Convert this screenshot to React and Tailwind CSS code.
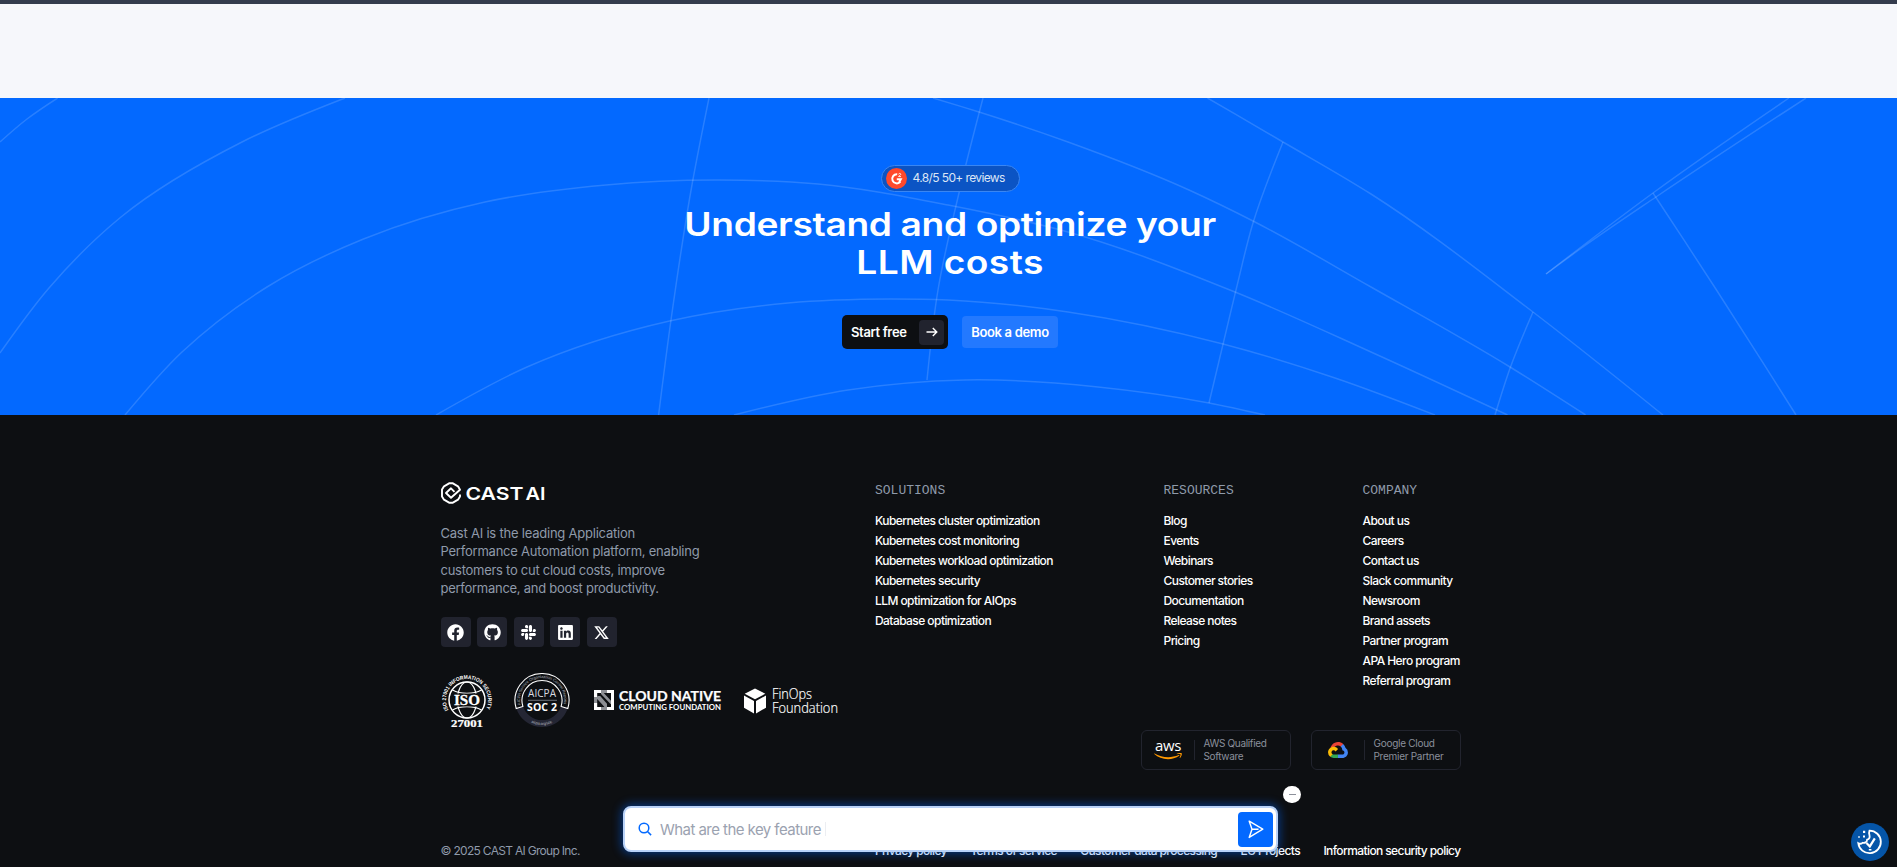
import { FaFacebook, FaGithub, FaSlack, FaLinkedin } from "react-icons/fa";
import { RiTwitterXLine } from "react-icons/ri";

const curves = [
  [[57.6, 0], [27, 21], [0, 44]],
  [[345, 0], [242, 44], [121, 119], [49, 190], [0, 255]],
  [[125, 317], [182, 254], [267, 189], [363.5, 141], [485, 104], [606, 87], [715, 82], [818, 86], [948, 107], [1068, 134], [1235, 194], [1371, 254], [1507.5, 317]],
  [[436, 317], [527, 269], [669.5, 223], [788, 205], [891, 201], [948, 202], [1068, 214], [1223, 246], [1335, 280], [1435, 317]],
  [[734, 317], [848, 292], [965, 282], [1098, 289], [1209, 305], [1265, 317]],
  [[933, 0], [979, 14], [1068, 44], [1189, 92], [1253, 123], [1371, 189], [1510, 269], [1585.6, 317]],
  [[1207.5, 0], [1283, 44], [1371, 96], [1533, 214], [1663, 317]],
  [[1789, 0], [1653, 95], [1546, 176]],
  [[1806, 0], [1656, 99], [1583, 149], [1546, 176]],
  [[1653, 95], [1716.5, 192], [1796, 317]],
  [[709, 0], [692.5, 84], [671, 222], [658.6, 317]],
  [[983, 0], [959, 95], [938, 192], [927, 282]],
  [[1283, 44], [1253, 125], [1236, 192], [1209, 305]],
  [[1533, 214], [1510.5, 269], [1495, 317]],
];

// Chord-length weighted spline through the given points.
function smooth(p) {
  const n = p.length - 1;
  const len = [];
  const dir = [];
  for (let i = 0; i < n; i++) {
    const dx = p[i + 1][0] - p[i][0];
    const dy = p[i + 1][1] - p[i][1];
    len[i] = Math.hypot(dx, dy);
    dir[i] = [dx / len[i], dy / len[i]];
  }
  const m = [];
  for (let i = 1; i < n; i++) {
    m[i] = [0, 1].map((k) => (dir[i - 1][k] * len[i] + dir[i][k] * len[i - 1]) / (len[i] + len[i - 1]));
  }
  m[0] = [0, 1].map((k) => 1.5 * dir[0][k] - 0.5 * m[1][k]);
  m[n] = [0, 1].map((k) => 1.5 * dir[n - 1][k] - 0.5 * m[n - 1][k]);
  let d = `M${p[0][0]} ${p[0][1]}`;
  for (let i = 0; i < n; i++) {
    const h = len[i] / 3;
    const a = [p[i][0] + m[i][0] * h, p[i][1] + m[i][1] * h];
    const b = [p[i + 1][0] - m[i + 1][0] * h, p[i + 1][1] - m[i + 1][1] * h];
    d += `C${a[0].toFixed(1)} ${a[1].toFixed(1)} ${b[0].toFixed(1)} ${b[1].toFixed(1)} ${p[i + 1][0]} ${p[i + 1][1]}`;
  }
  return d;
}

const columns = [
  { title: "SOLUTIONS", width: "w-[288.5px]", links: ["Kubernetes cluster optimization", "Kubernetes cost monitoring", "Kubernetes workload optimization", "Kubernetes security", "LLM optimization for AIOps", "Database optimization"] },
  { title: "RESOURCES", width: "w-[199px]", links: ["Blog", "Events", "Webinars", "Customer stories", "Documentation", "Release notes", "Pricing"] },
  { title: "COMPANY", width: "w-[98px]", links: ["About us", "Careers", "Contact us", "Slack community", "Newsroom", "Brand assets", "Partner program", "APA Hero program", "Referral program"] },
];

const socials = [FaFacebook, FaGithub, FaSlack, FaLinkedin, RiTwitterXLine];

function Hero() {
  return (
    <section className="relative h-[317px] overflow-hidden bg-[#0369ff]">
      <svg className="absolute inset-0" width="1897" height="317" fill="none" stroke="#fff" strokeOpacity="0.15" strokeWidth="1.5">
        {curves.map((c, i) => <path key={i} d={smooth(c)} />)}
      </svg>
      <div className="relative flex flex-col items-center pl-[3px] pt-[67px]">
        <div className="flex h-[27px] w-[139px] items-center rounded-full border border-[#3a86f2] bg-[#0b54c4] pl-[4px] text-[12px] tracking-[-0.62px] text-[#dce6f6]">
          <svg width="21" height="21" viewBox="0 0 21 21" className="mr-[6px] shrink-0">
            <circle cx="10.5" cy="10.5" r="10.5" fill="#ff492c" />
            <path d="M11.2 6.2a4.6 4.6 0 1 0 3.2 7.5M10.8 11.2h4l-1.6 3" fill="none" stroke="#fff" strokeWidth="2" />
            <path d="M12.6 6.3c.3-1.3 2.4-1.1 2.1.2-.2.9-2 1-2.1 2.1h2.4" fill="none" stroke="#fff" strokeWidth=".9" />
          </svg>
          <span className="relative -top-px whitespace-nowrap">4.8/5 50+ reviews</span>
        </div>
        <h2 className="mt-[14px] flex scale-x-[1.16] flex-col items-center whitespace-nowrap text-[32px] font-semibold leading-[38px] text-white">
          <span className="tracking-[-0.3px]">Understand and optimize your</span>
          <span className="tracking-[0.39px]">LLM costs</span>
        </h2>
        <div className="mt-[33px] flex items-center gap-[14px] text-[13px] font-semibold text-white">
          <div className="flex h-[34px] w-[106px] items-center justify-between rounded-[5px] bg-[#0d0f12] pl-[9px] pr-[4px]">
            <span className="pt-[2px] tracking-[-0.36px]">Start free</span>
            <span className="flex h-[25px] w-[25px] items-center justify-center rounded-[4px] bg-[#21232e]">
              <svg width="12" height="10" viewBox="0 0 12 10" fill="none" stroke="#fff" strokeWidth="1.4"><path d="M.5 5h10.3M6.8 1l4 4-4 4" /></svg>
            </span>
          </div>
          <div className="flex h-8 w-24 items-center justify-center rounded-[4px] bg-[#2379ff] pt-[2px] tracking-[-0.33px]">Book a demo</div>
        </div>
      </div>
    </section>
  );
}

function CastLogo() {
  return (
    <svg width="106" height="22" viewBox="0 0 106 22" fill="none">
      <path d="M13.5 9.8 10 6.3 5 11l5 4.8L19 7.8 17 4.3 11.500 1.200h-3L3 4.300 1 7.500v7L3 17.700l5.500 3.100h3L17 17.700l2-3.200v-2" stroke="#fff" strokeWidth="1.900" strokeLinejoin="round" />
      <text x="24.500" y="17.600" fontFamily="Inter" fontSize="17.800" fontWeight="600" fill="#fff" textLength="58" lengthAdjust="spacingAndGlyphs">CAST</text>
      <text x="84.500" y="17.600" fontFamily="Inter" fontSize="17.800" fontWeight="600" fill="#fff" textLength="20" lengthAdjust="spacingAndGlyphs">AI</text>
    </svg>
  );
}

function IsoBadge() {
  return (
    <svg width="54" height="56" viewBox="0 0 54 56" fill="none">
      <path id="iso-arc" d="M7.5 36.900A21 21 0 1 1 44.500 36.900" />
      <text fontFamily="Liberation Sans" fontWeight="700" fontSize="5.400" fill="#fff"><textPath href="#iso-arc" textLength="85" lengthAdjust="spacingAndGlyphs">ISO 27001 INFORMATION SECURITY</textPath></text>
      <g stroke="#fff" strokeWidth="1.200">
        <circle cx="26" cy="27" r="18" strokeWidth="1.500" />
        <ellipse cx="26" cy="27" rx="9.500" ry="18" />
        <path d="M11.500 17c8 4.500 21 4.500 29 0M11.500 37c8-4.500 21-4.500 29 0" />
      </g>
      <path d="M12 20.500h28v13H12z" fill="#0d0f12" />
      <text x="26" y="31.800" textAnchor="middle" fontFamily="Liberation Serif" fontWeight="700" fontSize="14.500" fill="#fff" stroke="#fff" strokeWidth=".3" textLength="26" lengthAdjust="spacingAndGlyphs">ISO</text>
      <text x="26" y="54" textAnchor="middle" fontFamily="Liberation Serif" fontWeight="700" fontSize="9.500" fill="#fff" stroke="#fff" strokeWidth=".2" textLength="32" lengthAdjust="spacingAndGlyphs">27001</text>
    </svg>
  );
}

function SocBadge() {
  return (
    <svg width="56" height="56" viewBox="0 0 56 56" fill="none">
      <path d="M2.200 35A27 27 0 0 0 53.800 35L47.100 33A20 20 0 0 1 8.900 33Z" fill="#242634" />
      <path d="M2.200 35.500A27 27 0 1 1 53.800 35.500L47.100 33.500A20 20 0 1 0 8.900 33.500Z" stroke="#fff" strokeWidth="1.100" />
      <path id="soc-arc" d="M7.100 33.800A22 22 0 1 1 48.900 33.800" />
      <text fontFamily="Liberation Sans" fontSize="4" fill="#aeb2bb"><textPath href="#soc-arc" startOffset="2" textLength="78">AICPA Service Organization Control Reports</textPath></text>
      <path id="soc-low" d="M12 46.200A25 25 0 0 0 44 46.200" />
      <text fontFamily="Liberation Sans" fontSize="4" fill="#aeb2bb"><textPath href="#soc-low" startOffset="6" textLength="22">aicpa.org/soc</textPath></text>
      <text x="28" y="24" textAnchor="middle" fontFamily="Open Sans" fontSize="10" fill="#d9dbe0" textLength="28">AICPA</text>
      <path d="M14 27.300h29" stroke="#6b6e77" strokeWidth="1" />
      <text x="28" y="37.500" textAnchor="middle" fontFamily="Open Sans" fontWeight="700" fontSize="10.500" fill="#fff" textLength="30">SOC 2</text>
    </svg>
  );
}

function CncfLogo() {
  return (
    <svg width="129" height="22" viewBox="0 0 129 22" fill="none">
      <path d="M0 0h7v3H3.200v4H0zM13 0h7v7h-3V3h-4zM0 13h3.200v4H7v3H0zM17 13h3v7h-7v-3h4z" fill="#fff" />
      <path d="M7 0h6v3H7zM0 7h3.200v6H0zM7 17h6v3H7zM7 3h2.800L17 10.800V14h-.5L7 4zM3.200 6l3-0L13 13.800V17h-2.500L3.200 9z" fill="#8d8f94" />
      <path d="M17 7h3v6h-3z" fill="#fff" />
      <text x="25" y="10.800" fontFamily="Lato" fontWeight="700" fontSize="13.500" fill="#fff" stroke="#fff" strokeWidth=".25" textLength="102" lengthAdjust="spacingAndGlyphs">CLOUD NATIVE</text>
      <text x="25" y="19.700" fontFamily="Lato" fontWeight="700" fontSize="7.600" fill="#fff" textLength="102" lengthAdjust="spacingAndGlyphs">COMPUTING FOUNDATION</text>
    </svg>
  );
}

function FinopsLogo() {
  return (
    <svg width="97" height="32" viewBox="0 0 97 32" fill="#fff">
      <path d="M11 1.500 21.300 6.700 11 12.200.700 6.700zM0 8.500l10 5.400V26.500L0 20.700zM22 8.500l-10 5.400V26.500l10-5.800z" />
      <text x="28" y="11.500" fontFamily="Open Sans" fontWeight="300" stroke="#fff" strokeWidth=".2" fontSize="15" textLength="40" lengthAdjust="spacingAndGlyphs">FinOps</text>
      <text x="28" y="26" fontFamily="Open Sans" fontWeight="300" stroke="#fff" strokeWidth=".2" fontSize="15" textLength="66" lengthAdjust="spacingAndGlyphs">Foundation</text>
    </svg>
  );
}

function AwsLogo() {
  return (
    <svg width="28" height="19" viewBox="0 0 28 19" fill="none">
      <text x="1" y="10" fontFamily="Open Sans" fontWeight="500" fontSize="14" fill="#fff" textLength="26" lengthAdjust="spacingAndGlyphs">aws</text>
      <g transform="translate(0 1.500) scale(0.0921)" fill="#f90">
        <path d="M273.500 143.700c-32.900 24.300-80.700 37.200-121.800 37.200-57.600 0-109.500-21.300-148.700-56.700-3.100-2.800-.300-6.600 3.400-4.400 42.400 24.600 94.700 39.500 148.800 39.500 36.500 0 76.600-7.600 113.500-23.200 5.500-2.500 10.200 3.600 4.800 7.600z" />
        <path d="M287.200 128.100c-4.200-5.400-27.800-2.600-38.500-1.300-3.200.400-3.700-2.400-.800-4.500 18.800-13.200 49.700-9.400 53.300-5 3.600 4.500-1 35.400-18.600 50.200-2.700 2.300-5.300 1.100-4.100-1.900 4-9.900 12.900-32.200 8.700-37.500z" />
      </g>
    </svg>
  );
}

function GcpLogo() {
  return (
    <svg width="20" height="16" viewBox="0 0 256 206">
      <path fill="#ea4335" d="M170.252 56.819l22.253-22.253 1.483-9.370C153.437-11.677 88.976-7.496 52.420 33.920 42.267 45.423 34.734 59.764 30.717 74.573l7.970-1.123 44.505-7.340 3.436-3.513c19.797-21.742 53.270-24.667 76.128-6.168l7.496.390z" />
      <path fill="#4285f4" d="M224.205 73.918a100.249 100.249 0 0 0-30.217-48.722l-31.232 31.232a55.515 55.515 0 0 1 20.379 44.037v5.544c15.350 0 27.797 12.445 27.797 27.796 0 15.352-12.446 27.485-27.797 27.485h-55.671l-5.466 5.934v33.340l5.466 5.231h55.670c39.930.311 72.553-31.494 72.864-71.424a72.303 72.303 0 0 0-31.793-60.453" />
      <path fill="#34a853" d="M71.870 205.796h55.593V161.290H71.870a27.275 27.275 0 0 1-11.467-2.498l-7.887 2.420-22.409 22.253-1.952 7.574a72.111 72.111 0 0 0 43.715 14.757" />
      <path fill="#fbbc05" d="M71.870 61.425C31.940 61.664-.237 94.228.001 134.158a72.301 72.301 0 0 0 28.222 56.880l32.248-32.246c-13.990-6.322-20.208-22.786-13.887-36.776 6.320-13.990 22.786-20.208 36.775-13.888a27.796 27.796 0 0 1 13.887 13.888l32.248-32.248A72.224 72.224 0 0 0 71.870 61.425" />
    </svg>
  );
}

function Partner({ logo, lines, pad, className }) {
  return (
    <div className={`flex h-10 w-[150px] items-center rounded-[6px] border border-[#22242e] ${className}`}>
      <div className={`flex w-[52px] ${pad}`}>{logo}</div>
      <div className="h-5 w-px bg-[#22242e]" />
      <div className="ml-[9px] whitespace-nowrap text-[10px] leading-[13px] text-[#8b8f9c]">
        {lines.map((l) => <div key={l}>{l}</div>)}
      </div>
    </div>
  );
}

function Footer() {
  return (
    <footer className="h-[452px] overflow-hidden bg-[#0d0f12] pl-[4px] pt-[67px]">
      <div className="mx-auto w-[1020px]">
        <div className="flex h-[248px]">
          <div className="w-[434.5px] shrink-0">
            <CastLogo />
            <p className="mt-[20px] whitespace-nowrap text-[13px] leading-[18.3px] tracking-[-0.22px] text-[#8f9aaa]">
              Cast AI is the leading Application<br />Performance Automation platform, enabling<br /><span className="tracking-[-0.27px]">customers to cut cloud costs, improve<br />performance, and boost productivity.</span>
            </p>
            <div className="mt-[20px] flex gap-[6.500px] text-white">
              {socials.map((Icon, i) => (
                <div key={i} className="flex size-[30px] items-center justify-center rounded-[4px] bg-[#21232e]"><Icon className="size-[17px]" /></div>
              ))}
            </div>
            <div className="mt-[26px] flex h-[56px] items-start">
              <IsoBadge />
              <div className="ml-[19px]"><SocBadge /></div>
              <div className="ml-[24px] mt-[17px]"><CncfLogo /></div>
              <div className="ml-[21px] mt-[14px] shrink-0"><FinopsLogo /></div>
            </div>
          </div>
          {columns.map((c) => (
            <div key={c.title} className={`shrink-0 ${c.width}`}>
              <h3 className="pt-px font-[Liberation_Mono,monospace] text-[13px] leading-[16px] text-[#8f9aaa]">{c.title}</h3>
              <ul className="mt-[11.500px] whitespace-nowrap text-[12px] font-medium leading-[20.100px] tracking-[-0.570px] text-white">
                {c.links.map((l) => <li key={l}>{l}</li>)}
              </ul>
            </div>
          ))}
        </div>
        <div className="flex justify-end gap-5">
          <Partner className="tracking-[-0.340px]" pad="pl-[12px]" logo={<AwsLogo />} lines={["AWS Qualified", "Software"]} />
          <Partner className="tracking-[-0.270px]" pad="pl-[16px]" logo={<GcpLogo />} lines={["Google Cloud", "Premier Partner"]} />
        </div>
        <div className="mt-[73px] flex whitespace-nowrap text-[12px] font-medium leading-4 tracking-[-0.600px] text-white">
          <span className="w-[434.5px] font-normal tracking-[-0.700px] text-[#8f9aaa]">© 2025 CAST AI Group Inc.</span>
          <div className="flex flex-1 justify-between">
            {["Privacy policy", "Terms of service", "Customer data processing", "EU Projects", "Information security policy"].map((l) => <span key={l}>{l}</span>)}
          </div>
        </div>
      </div>
    </footer>
  );
}

export default function App() {
  return (
    <div className="relative h-[867px] overflow-hidden bg-[#0d0f12] font-[Inter,sans-serif]">
      <div className="h-[98px] border-t-4 border-[#343c4d] bg-[#f6f7fb]" />
      <Hero />
      <Footer />
      <div className="absolute left-[623px] top-[806px] flex h-[46px] w-[655px] items-center rounded-[8px] border-2 border-[#b9d2f8] bg-white pl-[13px] pr-[3px] shadow-[0_0_10px_2px_rgba(3,105,255,0.45)]">
        <svg width="14" height="14" viewBox="0 0 14 14" fill="none" stroke="#0369ff" strokeWidth="1.500"><circle cx="6" cy="6" r="4.800" /><path d="m9.500 9.500 3.600 3.600" /></svg>
        <span className="ml-[8px] whitespace-nowrap pt-[2px] text-[15px] tracking-[-0.550px] text-[#9ba2b0]">What are the key feature</span>
        <span className="ml-[4px] h-[14px] w-px bg-[#eceef2]" />
        <span className="ml-auto flex h-[35px] w-[35px] items-center justify-center rounded-[4px] bg-[#0369ff]">
          <svg width="16" height="19" viewBox="0 0 16 19" fill="none" stroke="#fff" strokeWidth="1.400" strokeLinejoin="round"><path d="M1.200 1.200 14.800 9.200 1.200 17.400 4 9.200zM4 9.200h6.500" /></svg>
        </span>
      </div>
      <div className="absolute left-[1283px] top-[786px] flex h-[17px] w-[18px] items-center justify-center rounded-full bg-white"><span className="h-px w-[7px] bg-[#8d919b]" /></div>
      <div className="absolute left-[1851px] top-[823px] flex size-[38px] items-center justify-center rounded-full bg-[#0555a8]">
        <svg width="26" height="26" viewBox="0 0 26 26" fill="none" stroke="#fff" strokeWidth="1.800">
          <path d="M12.500 1.600a11.300 11.300 0 1 1-11.200 12.600c1.500.800 3 .700 4.200-.400 2.400.600 4.500-.700 4.600-3.100 2-.7 2.900-2.400 2.400-4.300-.600-1.600-.600-3.200 0-4.800z" />
          <path d="m9.500 14 3.300 3.400 5-8" strokeWidth="2.200" />
          <path d="M6 1.800h2.200v2.200H6zM1.200 7.200h1.600v1.600H1.200zM6 6.500h2v2H6zM11.800 20h2.600v1.500h-2.600z" fill="#fff" stroke="none" />
        </svg>
      </div>
    </div>
  );
}
